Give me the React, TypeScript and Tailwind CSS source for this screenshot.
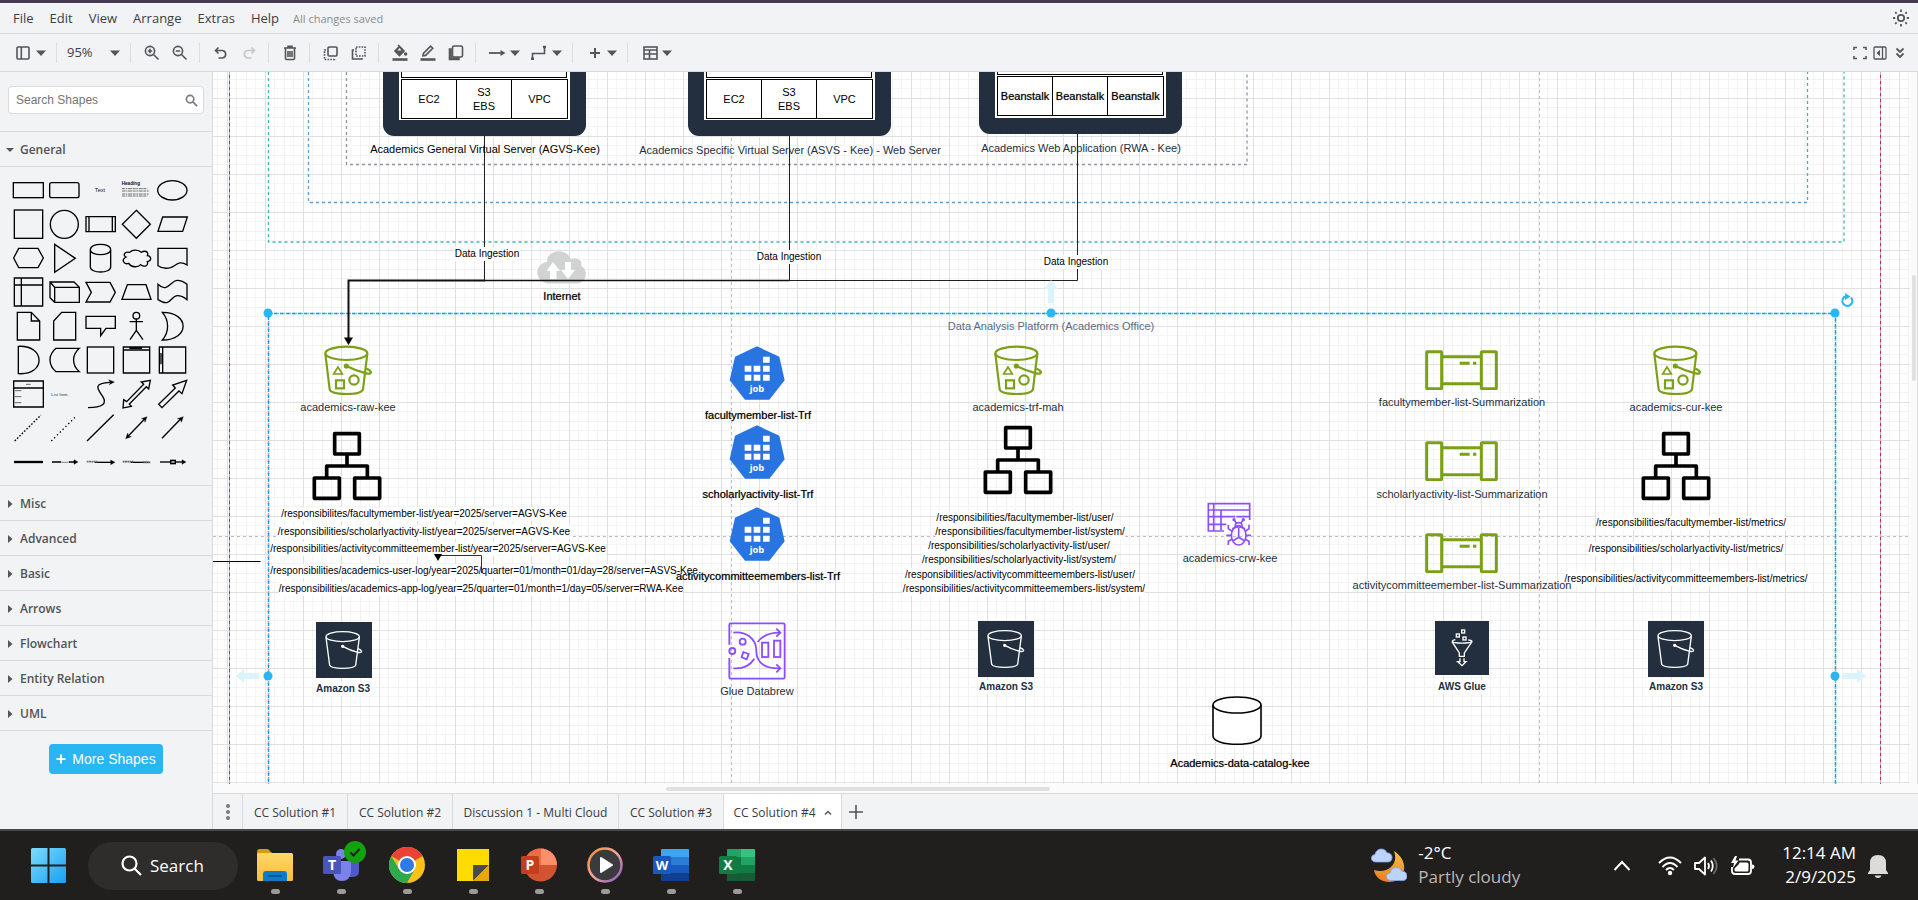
import React from "react";

/* ---------- shared helpers ---------- */

type P = { children?: React.ReactNode };

const Caret = () => (
  <svg width="10" height="6" viewBox="0 0 10 6" className="shrink-0">
    <path d="M0 0.5H10L5 6Z" fill="#555659" />
  </svg>
);

function ToolButton({ label, children, wide }: { label: string; children: React.ReactNode; wide?: boolean }) {
  return (
    <button
      aria-label={label}
      className={
        wide
          ? "flex h-7 w-[42px] shrink-0 items-center gap-[3px] pl-[5px] text-[#555659]"
          : "flex h-7 w-7 shrink-0 items-center justify-center text-[#555659]"
      }
    >
      {children}
    </button>
  );
}

const Group = ({ children }: P) => (
  <div className="flex h-5 shrink-0 items-center border-r border-[#dcdee0] px-1.5">{children}</div>
);

const I = ({ children }: P) => (
  <svg width="20" height="22" viewBox="-1 0 20 22" fill="none" stroke="currentColor" strokeWidth="1.6" className="shrink-0">
    {children}
  </svg>
);

/* ---------- menu and toolbar ---------- */

function MenuBar() {
  return (
    <header className="flex h-[34px] shrink-0 items-center border-b border-t-[3px] border-b-[#d8dadd] border-t-[#453a52] bg-[#f1f3f5] pl-[13px] pr-2">
      <nav className="flex items-center gap-4 pt-0.5 font-['Open_Sans',sans-serif] text-[13px] text-[#3f4042]">
        {["File", "Edit", "View", "Arrange", "Extras", "Help"].map((m) => (
          <button key={m}>{m}</button>
        ))}
      </nav>
      <span className="ml-3.5 pt-0.5 font-['Open_Sans',sans-serif] text-[11px] text-[#8a8c8f]">All changes saved</span>
      <button aria-label="Appearance" className="ml-auto text-[#555659]">
        <svg width="18" height="18" viewBox="0 0 18 18" fill="none" stroke="currentColor" strokeWidth="1.8">
          <circle cx="9" cy="9" r="3.2" />
          <path d="M9 0.5V3M9 15V17.5M1 9H3.2M14.8 9H17M3.2 3.2L4.6 4.6M13.4 13.4L14.8 14.8M14.8 3.2L13.4 4.6M4.6 13.4L3.2 14.8" />
        </svg>
      </button>
    </header>
  );
}

function Toolbar() {
  return (
    <div className="flex h-[38px] shrink-0 items-center border-b border-[#d8dadd] bg-[#f1f3f5] px-2">
      <div className="flex h-5 shrink-0 items-center border-r border-[#dcdee0] pr-1.5">
        <ToolButton label="View" wide>
          <I>
            <rect x="3" y="5" width="12" height="12" rx="1" />
            <path d="M7.3 5V17" />
          </I>
          <Caret />
        </ToolButton>
      </div>
      <div className="flex h-5 w-[74px] shrink-0 items-center border-r border-[#dcdee0] pl-[10px] pr-[10px]">
        <button className="flex flex-1 items-center justify-between font-['Open_Sans',sans-serif] text-[13px] text-[#3f4042]">
          95%
          <Caret />
        </button>
      </div>
      <Group>
        <ToolButton label="Zoom in">
          <I>
            <circle cx="8" cy="9" r="4.6" />
            <path d="M11.5 12.5L16.5 17.5M8 6.8V11.2M5.8 9H10.2" />
          </I>
        </ToolButton>
        <ToolButton label="Zoom out">
          <I>
            <circle cx="8" cy="9" r="4.6" />
            <path d="M11.5 12.5L16.5 17.5M5.8 9H10.2" />
          </I>
        </ToolButton>
      </Group>
      <Group>
        <ToolButton label="Undo">
          <I>
            <path d="M7.5 5.5L4.5 8.5L7.5 11.5M4.8 8.5H11.5A3.8 3.8 0 0 1 11.5 16H7.5" />
          </I>
        </ToolButton>
        <ToolButton label="Redo">
          <svg width="20" height="22" viewBox="-1 0 20 22" fill="none" stroke="#c4c6c8" strokeWidth="1.6">
            <path d="M12.5 5.5L15.5 8.5L12.5 11.5M15.2 8.5H8.5A3.8 3.8 0 0 0 8.5 16H12.5" />
          </svg>
        </ToolButton>
      </Group>
      <Group>
        <ToolButton label="Delete">
          <I>
            <path d="M4 6H16M8 5.6V4.4H12V5.6M5.5 6.5V16.5Q5.5 17.5 6.5 17.5H13.5Q14.5 17.5 14.5 16.5V6.5M8 9V15M10 9V15M12 9V15" />
          </I>
        </ToolButton>
      </Group>
      <Group>
        <ToolButton label="To front">
          <I>
            <rect x="7" y="5" width="9" height="9" rx="1" />
            <path d="M5 8H3.5V17.5H13.5V16" strokeDasharray="1.6 1.2" />
          </I>
        </ToolButton>
        <ToolButton label="To back">
          <I>
            <rect x="7" y="5" width="9" height="9" strokeDasharray="1.6 1.2" />
            <path d="M5 8H3.5V17H13V16" />
          </I>
        </ToolButton>
      </Group>
      <Group>
        <ToolButton label="Fill colour">
          <I>
            <path d="M5 9L9.5 4.5L14 9L9.5 13.5ZM8 3L9.5 4.5" fill="currentColor" />
            <path d="M7.5 8.5L9.5 6L11.5 8.5Z" fill="#f1f3f5" stroke="none" />
            <circle cx="15.6" cy="12" r="1" fill="currentColor" />
            <path d="M2.500 17.500H17.500" strokeWidth="2.6" />
          </I>
        </ToolButton>
        <ToolButton label="Line colour">
          <I>
            <path d="M5 13.8L5.4 11.4L12.6 4.2L14.8 6.2L7.6 13.4Z" />
            <path d="M2.500 17.500H17.500" strokeWidth="2.6" />
          </I>
        </ToolButton>
        <ToolButton label="Shadow">
          <I>
            <path d="M3.500 7V17.500H13V16H5V7Z" fill="currentColor" />
            <rect x="6.500" y="4" width="10" height="11" rx="1.5" />
          </I>
        </ToolButton>
      </Group>
      <Group>
        <ToolButton label="Connection" wide>
          <I>
            <path d="M1 11H14" strokeWidth="1.8" />
            <path d="M12.500 8L17.500 11L12.500 14Z" fill="currentColor" stroke="none" />
          </I>
          <Caret />
        </ToolButton>
        <ToolButton label="Waypoints" wide>
          <I>
            <path d="M2.500 17V11.500H14.500V5" />
            <path d="M2.500 15.500V18M14.500 3.800V6.200" strokeWidth="3" />
          </I>
          <Caret />
        </ToolButton>
      </Group>
      <Group>
        <ToolButton label="Insert" wide>
          <I>
            <path d="M10 6V16M5 11H15" strokeWidth="2" />
          </I>
          <Caret />
        </ToolButton>
      </Group>
      <div className="flex items-center pl-1.5">
        <ToolButton label="Table" wide>
          <I>
            <rect x="4" y="5" width="13" height="12" />
            <path d="M4 8H17M4 12H17M9.500 8V17" />
          </I>
          <Caret />
        </ToolButton>
      </div>
      <div className="ml-auto flex shrink-0 items-center text-[#555659]">
        <button aria-label="Fullscreen" className="flex w-5 justify-center">
          <svg width="14" height="14" viewBox="0 0 14 14" fill="none" stroke="currentColor" strokeWidth="1.6">
            <path d="M1 4V1.500H4M10 1.500H13V4M13 10V12.500H10M4 12.500H1V10" />
          </svg>
        </button>
        <button aria-label="Format panel" className="flex w-5 justify-center">
          <svg width="14" height="14" viewBox="0 0 14 14" fill="none" stroke="currentColor" strokeWidth="1.3">
            <rect x="1" y="1" width="12" height="12" rx="1" />
            <path d="M9.500 1V13" />
            <path d="M7 3.800V10.200L3.500 7Z" fill="currentColor" stroke="none" />
          </svg>
        </button>
        <button aria-label="Collapse" className="flex w-5 justify-center">
          <svg width="10" height="12" viewBox="0 0 10 12" fill="none" stroke="currentColor" strokeWidth="1.8">
            <path d="M1.500 1.500L5 5L8.500 1.500M1.500 6.500L5 10L8.500 6.500" />
          </svg>
        </button>
      </div>
    </div>
  );
}

/* ---------- shape library ---------- */

const shapes: [string, React.ReactNode][] = [
  ["Rectangle", <rect x="10" y="29" width="90" height="45" />],
  ["Rounded rectangle", <rect x="11" y="29" width="88" height="45" rx="6" />],
  ["Text", <text x="54" y="56" fontSize="17" textAnchor="middle" fill="#222" stroke="none">Text</text>],
  [
    "Heading",
    <g>
      <text x="11" y="36" fontSize="14" fontWeight="bold" fill="#111" stroke="none">Heading</text>
      <path d="M12 47H88M12 54H93M12 63H93M12 69H88" strokeWidth="2.5" strokeDasharray="9 2 5 2 12 2" stroke="#555" />
    </g>,
  ],
  ["Ellipse", <ellipse cx="55" cy="52" rx="44" ry="29" />],
  ["Square", <rect x="13" y="9" width="85" height="85" />],
  ["Circle", <circle cx="55" cy="52" r="42" />],
  ["Process", <path d="M12 29H100V74H12ZM21 29V74M91 29V74" />],
  ["Diamond", <path d="M55 10L97 52L55 94L13 52Z" />],
  ["Parallelogram", <path d="M26 30H100L86 73H12Z" />],
  ["Hexagon", <path d="M11 51L26 22H84L100 51L84 80H26Z" />],
  ["Triangle", <path d="M26 10L88 52L26 94Z" />],
  ["Cylinder", <path d="M25 26V78C25 98 86 98 86 78V26C86 5 25 5 25 26C25 46 86 46 86 26" />],
  [
    "Cloud",
    <path d="M35 34C19 30 14 44 24 48C8 56 18 72 32 67C40 80 60 80 68 71C80 80 92 74 88 62C104 58 98 44 88 44C94 30 78 28 70 34C62 26 44 24 35 34Z" />,
  ],
  ["Document", <path d="M12 22H99V72C76 56 66 74 50 80C34 84 20 80 12 74Z" />],
  ["Internal storage", <path d="M13 9H98V93H13ZM13 30H98M34 9V93" />],
  ["Cube", <path d="M12 21H84L100 37V82H26L12 68ZM12 21L26 37V82M26 37H100" />],
  ["Step", <path d="M12 22H84L100 52L84 81H12L28 52Z" />],
  ["Trapezoid", <path d="M28 29H84L99 73H12Z" />],
  ["Tape", <path d="M12 28C40 56 50 16 70 16C84 16 92 22 99 28V74C92 68 84 62 70 62C50 62 50 100 12 74Z" />],
  ["Note", <path d="M22 10H64L89 36V93H22ZM64 10V36H89" />],
  ["Card", <path d="M47 10H89V93H23V36Z" />],
  ["Callout", <path d="M12 22H100V58H72L56 80V58H12Z" />],
  [
    "Actor",
    <g>
      <circle cx="55" cy="20" r="10" />
      <path d="M55 30V64M35 38H75M55 64L36 92M55 64L75 92" />
    </g>,
  ],
  ["Or", <path d="M25 10C108 10 108 93 25 93C46 70 46 34 25 10Z" />],
  ["And", <path d="M25 10C108 6 108 98 25 92Z" />],
  ["Data storage", <path d="M30 16H100C77 36 77 66 100 86H30C6 66 6 36 30 16Z" />],
  ["Container", <rect x="16" y="12" width="79" height="78" />],
  ["Vertical container", <path d="M16 12H95V90H16ZM16 21H95M34 16H72" />],
  ["Horizontal container", <path d="M16 12H95V90H16ZM26 12V90M21 30V64" />],
  [
    "List",
    <g>
      <path d="M11 12H100V90H11ZM11 33H100" />
      <path d="M48 22H62M14 41H34M14 59H34M14 77H34" strokeWidth="3" stroke="#666" />
    </g>,
  ],
  ["List item", <text x="16" y="56" fontSize="13" fill="#333" stroke="none">List Item</text>],
  [
    "Curve",
    <g>
      <path d="M18 92C62 92 76 80 62 58C48 38 30 18 84 16" />
      <path d="M80 8L97 15L82 23L85 16Z" fill="#000" strokeWidth="1" />
    </g>,
  ],
  ["Bidirectional arrow", <path d="M15 93L17 68L26 74L77 22L70 15L97 10L92 36L85 29L34 81L40 88Z" />],
  ["Arrow", <path d="M14 82L64 33L56 24L98 10L84 50L75 42L24 92Z" />],
  ["Dashed line", <path d="M14 90L93 12" strokeDasharray="5 5" />],
  ["Dotted line", <path d="M16 90L90 16" strokeDasharray="4 8" />],
  ["Line", <path d="M15 90L95 11" />],
  [
    "Bidirectional connector",
    <g>
      <path d="M28 78L82 22" />
      <path d="M23 83L29 66L31 75L40 77ZM87 17L81 34L79 25L70 23Z" fill="#000" strokeWidth="1" />
    </g>,
  ],
  [
    "Directional connector",
    <g>
      <path d="M24 82L82 22" />
      <path d="M88 17L82 34L79 25L70 23Z" fill="#000" strokeWidth="1" />
    </g>,
  ],
  ["Link", <path d="M12 51H99" strokeWidth="7" />],
  [
    "Connector with label",
    <g>
      <path d="M18 51H46M68 51H88" />
      <path d="M48 52H66" strokeWidth="3" stroke="#888" />
      <path d="M84 44L96 51L84 58Z" fill="#000" strokeWidth="1" />
    </g>,
  ],
  [
    "Connector with two labels",
    <g>
      <path d="M38 52H92" />
      <path d="M14 50H46" strokeWidth="5" stroke="#777" strokeDasharray="6 1" />
      <path d="M86 45L99 52L86 59Z" fill="#000" strokeWidth="1" />
    </g>,
  ],
  [
    "Connector with three labels",
    <g>
      <path d="M38 52H92" />
      <path d="M14 50H46M76 52H98" strokeWidth="5" stroke="#666" strokeDasharray="6 1" />
    </g>,
  ],
  [
    "Connector with symbol",
    <g>
      <path d="M18 51H88" />
      <rect x="50" y="46" width="14" height="10" fill="#999" />
      <path d="M84 44L96 51L84 58Z" fill="#000" strokeWidth="1" />
    </g>,
  ],
];

function Sidebar() {
  return (
    <aside className="flex w-[213px] shrink-0 flex-col border-r border-[#d8dadd] bg-[#f1f3f5]">
      <div className="border-b border-[#d8dadd] pt-[14px] pr-2 pb-[17px] pl-2">
        <label className="flex h-7 items-center rounded border border-[#d9dbdd] bg-white pr-[5px] pl-[7px]">
          <input
            aria-label="Search Shapes"
            placeholder="Search Shapes"
            className="min-w-0 flex-1 bg-transparent font-['Liberation_Sans',sans-serif] text-[12px] text-[#333] outline-none placeholder:text-[#757575]"
          />
          <svg width="13" height="13" viewBox="0 0 14 14" fill="none" stroke="#77797c" strokeWidth="1.800">
            <circle cx="5.500" cy="5.500" r="4" />
            <path d="M8.500 8.500L13 13" />
          </svg>
        </label>
      </div>
      <button className="flex h-[35px] shrink-0 items-center border-b border-[#d8dadd] pt-0.5 pl-[5px] font-['Open_Sans',sans-serif] text-[12px] font-semibold text-[#515356]">
        <svg width="10" height="6" viewBox="0 0 10 6" className="mr-[5px]">
          <path d="M1 1H9L5 5Z" fill="#555659" />
        </svg>
        General
      </button>
      <div className="grid grid-cols-[repeat(5,36px)] border-b border-[#d8dadd] pt-[6px] pb-[6px] pl-[10px]">
        {shapes.map(([name, art]) => (
          <button key={name} aria-label={name} className="h-[34px] w-9">
            <svg
              width="36"
              height="34"
              viewBox="0 0 108 102"
              fill="none"
              stroke="#000"
              strokeWidth="4"
              fontFamily="Liberation Sans, sans-serif"
            >
              {art}
            </svg>
          </button>
        ))}
      </div>
      {["Misc", "Advanced", "Basic", "Arrows", "Flowchart", "Entity Relation", "UML"].map((s) => (
        <button
          key={s}
          className="flex h-[35px] shrink-0 items-center border-b border-[#d8dadd] pt-0.5 pl-2 font-['Open_Sans',sans-serif] text-[12px] font-semibold text-[#515356]"
        >
          <svg width="5" height="8" viewBox="0 0 5 8" className="mr-[7px]">
            <path d="M0 0L4.500 4L0 8Z" fill="#555659" />
          </svg>
          {s}
        </button>
      ))}
      <button className="mt-[13px] mb-4 flex h-[30px] w-[114px] shrink-0 items-center justify-center gap-1.5 self-center rounded bg-[#29b6f2] font-['Liberation_Sans',sans-serif] text-[14px] text-white">
        <svg width="10" height="10" viewBox="0 0 10 10" stroke="#fff" strokeWidth="2">
          <path d="M5 0.500V9.500M0.500 5H9.500" />
        </svg>
        More Shapes
      </button>
    </aside>
  );
}

/* ---------- canvas ---------- */

/* Diagram coordinates are window based; the view origin is the canvas corner. */
const OX = 213;
const OY = 72;

function Node({ x, y, children }: { x: number; y: number; children: React.ReactNode }) {
  return (
    <div className="absolute" style={{ left: x - OX, top: y - OY }}>
      {children}
    </div>
  );
}

const tones = {
  black: "text-[11px] text-black",
  navy: "text-[11px] text-[#232f3e]",
  slate: "text-[11px] text-[#5a6c86]",
  edge: "bg-white text-[10px] text-black",
  solid: "text-[11px] text-black [text-shadow:0_0_1px_#0008]",
  bold: "bg-white text-[10px] font-bold text-[#232f3e]",
};

function Label({ x, y, tone, children }: { x: number; y: number; tone: keyof typeof tones; children: string }) {
  return (
    <div
      className={
        "absolute -translate-x-1/2 -translate-y-1/2 font-['Liberation_Sans',Arial,sans-serif] leading-[14px] whitespace-nowrap " +
        tones[tone]
      }
      style={{ left: x - OX, top: y - OY }}
    >
      {children}
    </div>
  );
}

function Server({ x, bottom, pad, cells, strong }: { x: number; bottom: number; pad: string; cells: string[]; strong?: boolean }) {
  return (
    <div
      className="absolute flex w-[203px] flex-col rounded-b-[11px] bg-[#232f3e] px-4 pb-4"
      style={{ left: x - OX, top: 0, height: bottom - OY }}
    >
      <div className={"flex flex-1 flex-col justify-end bg-white px-0.5 " + pad}>
        <div className="mr-px flex-1 border-x border-b border-black" />
        <div className="mt-px grid h-10 grid-cols-3 divide-x divide-black border border-black bg-white text-center font-['Liberation_Sans',Arial,sans-serif] text-[11px] leading-[14px] text-black">
          {cells.map((c, i) => (
            <div key={i} className="flex items-center justify-center whitespace-pre-line">
              {strong ? <span className="[text-shadow:0_0_1px_#0008]">{c}</span> : c}
            </div>
          ))}
        </div>
      </div>
    </div>
  );
}

const Bucket = () => (
  <svg width="50" height="51" viewBox="340 134 150 153" fill="none" stroke="#7aa116" strokeWidth="6.500">
    <ellipse cx="410" cy="159" rx="63" ry="20" />
    <path d="M347 160L360 267Q363 281 410 281Q455 281 460 267L473 160" />
    <circle cx="410" cy="197" r="4.500" fill="#7aa116" />
    <path d="M410 197Q440 212 470 219Q484 222 484 216Q482 209 470 205" />
    <path d="M385 200L372 221H398Z" strokeWidth="5" />
    <rect x="379" y="240" width="24" height="24" />
    <circle cx="433" cy="239" r="14" />
  </svg>
);

const Hierarchy = () => (
  <svg width="70" height="70" viewBox="305 393 210 210" fill="none" stroke="#000" strokeWidth="11" strokeLinejoin="round">
    <rect x="373" y="401" width="74" height="61" />
    <rect x="312" y="534" width="75" height="61" />
    <rect x="433" y="534" width="75" height="61" />
    <path d="M410 462V497M349 534V498H471V534" />
  </svg>
);

const Job = () => (
  <svg width="56" height="54" viewBox="208 139 168 162">
    <path d="M292 140L359 171L375 242L329 300H256L210 242L226 171Z" fill="#2875e2" />
    <path
      d="M310 171h20v18h-20zM255 198h20v18h-20zM282 198h20v18h-20zM310 198h20v18h-20zM255 225h20v18h-20zM282 225h20v18h-20zM310 225h20v18h-20z"
      fill="#fff"
    />
    <text x="292" y="276" textAnchor="middle" fill="#fff" fontSize="28" fontWeight="700" fontFamily="Open Sans, sans-serif">
      job
    </text>
  </svg>
);

const S3Tile = () => (
  <svg width="56" height="56" viewBox="0 0 168 168" fill="none" stroke="#fff" strokeWidth="4">
    <rect width="168" height="168" fill="#232f3e" stroke="none" />
    <ellipse cx="80" cy="44" rx="50" ry="15" />
    <path d="M30 46L41 130Q45 139 80 139Q115 139 119 130L130 46" />
    <circle cx="80" cy="73" r="3" fill="#fff" />
    <path d="M80 73Q104 86 126 91Q137 93 137 88Q136 84 126 80" />
  </svg>
);

const GlueTile = () => (
  <svg width="54" height="54" viewBox="944 962 162 162" fill="none" stroke="#fff" strokeWidth="4">
    <rect x="944" y="962" width="162" height="162" fill="#232f3e" stroke="none" />
    <rect x="1024" y="989" width="9" height="9" />
    <rect x="1008" y="1001" width="9" height="9" />
    <rect x="1028" y="1010" width="9" height="9" />
    <path d="M1005 1018Q990 1022 1000 1026Q1024 1031 1050 1026Q1062 1021 1044 1019" />
    <path d="M995 1024L1017 1058V1068H1032V1058L1055 1024" />
    <path d="M1019 1074V1084H1012L1025 1096L1037 1084H1031V1074" />
  </svg>
);

const Databrew = () => (
  <svg width="58" height="58" viewBox="203 964 174 174" fill="none" stroke="#8c4fff" strokeWidth="5.500">
    <path d="M207 1032V972Q207 968 211 968H369Q373 968 373 972V1130Q373 1134 369 1134H211Q207 1134 207 1130V1072" />
    <path d="M219 996C252 991 288 1010 288 1051C288 1090 320 1104 358 1103" />
    <path d="M219 1103Q262 1106 282 1074M292 1024Q312 996 358 996" />
    <path d="M348 984L360 996L348 1008M348 1091L360 1103L348 1115" />
    <circle cx="247" cy="1023" r="9" />
    <circle cx="216" cy="1051" r="9" />
    <path d="M249 1054L265 1060L259 1076L244 1070Z" />
    <rect x="305" y="1026" width="19" height="43" />
    <rect x="341" y="1020" width="19" height="49" />
  </svg>
);

const Crawler = () => (
  <svg width="45" height="46" viewBox="262 606 135 138" fill="none" stroke="#8c4fff" strokeWidth="5">
    <path d="M313 693H266V611H390V660M266 630H390M266 650H347M266 673H320M282 611V693M304 630V690M350 650H390" />
    <ellipse cx="357" cy="706" rx="22" ry="29" />
    <path d="M338 686Q357 676 376 686M357 684V714M340 722L357 712L374 722" />
    <path d="M347 680Q345 668 357 668Q369 668 367 680M349 668L344 660M365 668L370 660" />
    <circle cx="343" cy="659" r="2.500" fill="#8c4fff" />
    <circle cx="371" cy="659" r="2.500" fill="#8c4fff" />
    <path d="M336 693L326 686V674M378 693L388 686V674M334 706H320M380 706H394M337 718L326 724V735M377 718L388 724V735" />
  </svg>
);

const Pipe = () => (
  <svg width="73" height="40" viewBox="915 422 219 120" fill="none" stroke="#7aa116" strokeWidth="9">
    <rect x="920" y="427" width="45" height="111" rx="2" />
    <rect x="1084" y="427" width="45" height="111" rx="2" />
    <path d="M965 442H1084M965 523H1084M1019 462H1049M1059 462H1069" />
  </svg>
);

const labels: [number, number, keyof typeof tones, string][] = [
  [485, 149, "black", "Academics General Virtual Server (AGVS-Kee)"],
  [790, 150, "navy", "Academics Specific Virtual Server (ASVS - Kee) - Web Server"],
  [1081, 148, "navy", "Academics Web Application (RWA - Kee)"],
  [487, 254, "edge", "Data Ingestion"],
  [789, 257, "edge", "Data Ingestion"],
  [1076, 262, "edge", "Data Ingestion"],
  [562, 296, "solid", "Internet"],
  [1051, 326, "slate", "Data Analysis Platform (Academics Office)"],
  [348, 407, "navy", "academics-raw-kee"],
  [1018, 407, "navy", "academics-trf-mah"],
  [1676, 407, "navy", "academics-cur-kee"],
  [424, 514, "edge", "/responsibilites/facultymember-list/year=2025/server=AGVS-Kee"],
  [424, 532, "edge", "/responsibilities/scholarlyactivity-list/year=2025/server=AGVS-Kee"],
  [438, 549, "edge", "/responsibilities/activitycommitteemember-list/year=2025/server=AGVS-Kee"],
  [484, 571, "edge", "/responsibilities/academics-user-log/year=2025/quarter=01/month=01/day=28/server=ASVS-Kee"],
  [481, 589, "edge", "/responsibilities/academics-app-log/year=25/quarter=01/month=1/day=05/server=RWA-Kee"],
  [758, 415, "solid", "facultymember-list-Trf"],
  [758, 494, "solid", "scholarlyactivity-list-Trf"],
  [758, 576, "solid", "activitycommitteemembers-list-Trf"],
  [1025, 518, "edge", "/responsibilities/facultymember-list/user/"],
  [1030, 532, "edge", "/responsibilities/facultymember-list/system/"],
  [1019, 546, "edge", "/responsibilities/scholarlyactivity-list/user/"],
  [1019, 560, "edge", "/responsibilities/scholarlyactivity-list/system/"],
  [1020, 575, "edge", "/responsibilities/activitycommitteemembers-list/user/"],
  [1024, 589, "edge", "/responsibilities/activitycommitteemembers-list/system/"],
  [1691, 523, "edge", "/responsibilities/facultymember-list/metrics/"],
  [1686, 549, "edge", "/responsibilities/scholarlyactivity-list/metrics/"],
  [1686, 579, "edge", "/responsibilities/activitycommitteemembers-list/metrics/"],
  [1462, 402, "navy", "facultymember-list-Summarization"],
  [1462, 494, "navy", "scholarlyactivity-list-Summarization"],
  [1462, 585, "navy", "activitycommitteemember-list-Summarization"],
  [1230, 558, "navy", "academics-crw-kee"],
  [343, 689, "bold", "Amazon S3"],
  [1006, 687, "bold", "Amazon S3"],
  [1676, 687, "bold", "Amazon S3"],
  [1462, 687, "bold", "AWS Glue"],
  [757, 691, "navy", "Glue Databrew"],
  [1240, 763, "solid", "Academics-data-catalog-kee"],
];

function Canvas() {
  return (
    <div className="relative min-h-0 flex-1 overflow-hidden bg-white">
      <svg className="absolute inset-0 h-full w-full">
        <defs>
          <pattern id="grid" width="38" height="38" x="14" y="26" patternUnits="userSpaceOnUse">
            <path d="M9.500 0V38M28.500 0V38M0 9.500H38M0 28.500H38" stroke="#f5f5f5" fill="none" />
            <path d="M19.500 0V38M0 19.500H38" stroke="#f2f2f2" fill="none" />
            <path d="M0.500 0V38M0 0.500H38" stroke="#e0e0e0" fill="none" />
          </pattern>
        </defs>
        <rect width="100%" height="100%" fill="url(#grid)" />
        <g transform="translate(-213 -72)" fill="none">
          <path d="M731.500 72V1200M1539.500 72V1200M213 536.500H2400" stroke="#bdbdbd" strokeDasharray="3 3" />
          <path d="M229.500 72V1200M1880.500 72V1200" stroke="#cd2264" />
          <path d="M229.500 72V1200M1880.500 72V1200" stroke="#b4b4b4" strokeDasharray="3 3" />
          <path d="M268.500 72V242H1844V72" stroke="#3fb8b0" strokeDasharray="3 3" strokeWidth="1.3" />
          <path d="M308.500 72V202.500H1807.500V72" stroke="#5a9fd0" strokeDasharray="3 3" strokeWidth="1.3" />
          <path d="M346.500 72V164.500H1247V72" stroke="#8a94ae" strokeDasharray="3 3" strokeWidth="1.3" />
          <path d="M268.500 1200V313.500H1835.500V1200" stroke="#a2a9b2" strokeWidth="1.600" strokeDasharray="3 3" />
          <path d="M268.500 1200V313.500H1835.500V1200" stroke="#00a0f4" strokeDasharray="3 3" strokeDashoffset="2" strokeWidth="1.400" />
          <path
            d="M548 283.500C533 281 535 263 547 262C546 251 565 246 571 259C580 256 583 264 581 266C588 269 588 282 577 283.500Z"
            fill="#d1d3d3"
          />
          <path d="M553 262L560 271H556.500V279H550V271H546.500ZM568 279L561 270H565V262H571V270H575Z" fill="#fff" />
          <path d="M213 561.500H260.500" stroke="#000" />
        </g>
      </svg>

      <Server x={383} bottom={136} pad="pb-px" cells={["EC2", "S3\nEBS", "VPC"]} />
      <Server x={688} bottom={136} pad="pb-px" cells={["EC2", "S3\nEBS", "VPC"]} />
      <Server x={979} bottom={134} pad="pb-0.5" cells={["Beanstalk", "Beanstalk", "Beanstalk"]} strong />

      <svg className="absolute inset-0 h-full w-full">
        <g transform="translate(-213 -72)" fill="none" stroke="#222">
          <path d="M1077.500 134V280.500H789" />
          <path d="M789.500 136V280.500" />
          <path d="M789.500 280.500H484" strokeWidth="1.500" stroke="#111" />
          <path d="M484.500 136V280" />
          <path d="M485 280.500H348.500V338" strokeWidth="2" stroke="#111" />
          <path d="M344 337.500H353L348.500 345Z" fill="#000" stroke="none" />
        </g>
      </svg>

      {[
        [323, 345],
        [993, 345],
        [1652, 345],
      ].map(([x, y]) => (
        <Node key={x} x={x} y={y}>
          <Bucket />
        </Node>
      ))}
      {[
        [312, 431],
        [983, 425],
        [1641, 431],
      ].map(([x, y]) => (
        <Node key={x} x={x} y={y}>
          <Hierarchy />
        </Node>
      ))}
      {[346, 425, 507].map((y) => (
        <Node key={y} x={729} y={y}>
          <Job />
        </Node>
      ))}
      {[
        [316, 622],
        [978, 621],
        [1648, 621],
      ].map(([x, y]) => (
        <Node key={x} x={x} y={y}>
          <S3Tile />
        </Node>
      ))}
      {[350, 441, 533].map((y) => (
        <Node key={y} x={1425} y={y}>
          <Pipe />
        </Node>
      ))}
      <Node x={1435} y={621}>
        <GlueTile />
      </Node>
      <Node x={728} y={622}>
        <Databrew />
      </Node>
      <Node x={1207} y={502}>
        <Crawler />
      </Node>
      <Node x={1211} y={695}>
        <svg width="52" height="51" viewBox="0 0 52 51" fill="#fff" stroke="#000" strokeWidth="1.600">
          <path d="M2 10V41C2 52 50 52 50 41V10" />
          <ellipse cx="26" cy="10" rx="24" ry="8" />
        </svg>
      </Node>

      {labels.map(([x, y, tone, text], i) => (
        <Label key={i} x={x} y={y} tone={tone}>
          {text}
        </Label>
      ))}

      <svg className="pointer-events-none absolute inset-0 h-full w-full">
        <g transform="translate(-213 -72)">
          <path d="M481.500 573V555.500H438" stroke="#333" fill="none" />
          <path d="M434 554H442L438 561Z" fill="#000" />
          <path d="M1051 280L1058 289H1054V303H1048V289H1044Z" fill="#dcf3fd" />
          <path d="M236 676L244 669V673H259V679H244V683Z" fill="#dcf3fd" />
          <path d="M1866 676L1857 669V673H1842V679H1857V683Z" fill="#dcf3fd" />
          <g fill="#29b6f2">
            <circle cx="268" cy="313" r="4.500" />
            <circle cx="1051" cy="313" r="4.500" />
            <circle cx="1835" cy="313" r="4.500" />
            <circle cx="268" cy="676" r="4.500" />
            <circle cx="1835" cy="676" r="4.500" />
          </g>
          <path d="M1851 297.500A5 5 0 1 1 1845 296.500" fill="none" stroke="#29b6f2" strokeWidth="2" />
          <path d="M1845 293L1850.500 296.500L1845 300Z" fill="#29b6f2" />
        </g>
      </svg>
    </div>
  );
}

function PageTabs() {
  const tabs = ["CC Solution #1", "CC Solution #2", "Discussion 1 - Multi Cloud", "CC Solution #3"];
  return (
    <div className="flex h-9 shrink-0 items-stretch border-t border-[#d8dadd] bg-[#f1f3f5] font-['Open_Sans',sans-serif] text-[12px] text-[#3a3b3d]">
      <button aria-label="Pages" className="flex w-[30px] items-center justify-center border-r border-[#d8dadd]">
        <svg width="4" height="16" viewBox="0 0 4 16" fill="#77797c">
          <circle cx="2" cy="2" r="2" />
          <circle cx="2" cy="8" r="2" />
          <circle cx="2" cy="14" r="2" />
        </svg>
      </button>
      {tabs.map((t, i) => (
        <button
          key={t}
          className={
            i === 2
              ? "w-[166px] border-r border-[#d8dadd] pt-0.5 whitespace-nowrap"
              : "w-[105px] border-r border-[#d8dadd] pt-0.5 whitespace-nowrap"
          }
        >
          {t}
        </button>
      ))}
      <button className="flex w-[118px] items-center justify-center gap-2 border-r border-[#d8dadd] bg-white pt-0.5 whitespace-nowrap">
        CC Solution #4
        <svg width="8" height="6" viewBox="0 0 8 6" fill="none" stroke="#555659" strokeWidth="1.500">
          <path d="M1 4.500L4 1.500L7 4.500" />
        </svg>
      </button>
      <button aria-label="Insert page" className="flex w-[28px] items-center justify-center">
        <svg width="14" height="14" viewBox="0 0 14 14" stroke="#555659" strokeWidth="1.600">
          <path d="M7 0V14M0 7H14" />
        </svg>
      </button>
    </div>
  );
}

/* ---------- taskbar ---------- */

const appIcons: [string, React.ReactNode][] = [
  [
    "File Explorer",
    <g>
      <path d="M0 5Q0 2 3 2H11L15 6V12H0Z" fill="#d99a12" />
      <rect y="6" width="36" height="28" rx="1.500" fill="url(#fold)" />
      <path d="M6 34V27Q6 24 9 24H27Q30 24 30 27V34Z" fill="#0f7ac8" />
      <path d="M11 29H25" stroke="#0a4f8a" strokeWidth="1.500" />
    </g>,
  ],
  [
    "Teams",
    <g>
      <circle cx="18" cy="7" r="5" fill="#7b83eb" />
      <path d="M24 14H36V24Q36 30 29 30H24Z" fill="#5059c9" />
      <path d="M10 14H28V25Q27 34 19 34T10 25Z" fill="#7b83eb" />
      <rect y="9" width="18" height="18" rx="1.500" fill="#4b53bc" />
      <text x="9" y="23" textAnchor="middle" fontSize="14" fontWeight="700" fill="#fff">T</text>
    </g>,
  ],
  [
    "Chrome",
    <g>
      <circle cx="18" cy="18" r="18" fill="#fbc116" />
      <path d="M18 18L2.400 9A18 18 0 0 1 33.600 9Z" fill="#ea4335" />
      <path d="M18 0A18 18 0 0 1 33.600 9H18Z" fill="#ea4335" />
      <path d="M2.400 9A18 18 0 0 0 18 36L25.800 22.500L18 26Q12 25 10.200 22.500Z" fill="#2da94f" />
      <circle cx="18" cy="18" r="9" fill="#fff" />
      <circle cx="18" cy="18" r="7" fill="#2f7ae5" />
    </g>,
  ],
  [
    "Sticky Notes",
    <g>
      <path d="M2 2H34V34H2Z" fill="#ffdc00" />
      <path d="M18 18H34L18 34Z" fill="#4a4a4a" />
      <path d="M34 18V34H18Z" fill="#e8a80c" />
    </g>,
  ],
  [
    "PowerPoint",
    <g>
      <circle cx="19.500" cy="18" r="16.500" fill="#d35230" />
      <path d="M19.500 1.500A16.500 16.500 0 0 1 36 18H19.500Z" fill="#ff8f6b" />
      <path d="M19.500 1.500A16.500 16.500 0 0 0 3 18H19.500Z" fill="#ed6c47" />
      <rect y="9" width="18" height="18" rx="1.500" fill="#c43e1c" />
      <text x="9" y="23" textAnchor="middle" fontSize="14" fontWeight="700" fill="#fff">P</text>
    </g>,
  ],
  [
    "Media Player",
    <g>
      <circle cx="18" cy="18" r="16.500" fill="#3b3b3d" stroke="url(#ring)" strokeWidth="2.500" />
      <path d="M14 11V25L25 18Z" fill="#fff" stroke="#fff" strokeWidth="2" strokeLinejoin="round" />
    </g>,
  ],
  [
    "Word",
    <g>
      <path d="M8 10V3Q8 2 9 2H35Q36 2 36 3V10Z" fill="#41a5ee" />
      <path d="M8 10H36V18H8Z" fill="#2b7cd3" />
      <path d="M8 18H36V26H8Z" fill="#185abd" />
      <path d="M8 26H36V33Q36 34 35 34H9Q8 34 8 33Z" fill="#103f91" />
      <rect y="9" width="18" height="18" rx="1.500" fill="#185abd" />
      <text x="9" y="23" textAnchor="middle" fontSize="13" fontWeight="700" fill="#fff">W</text>
    </g>,
  ],
  [
    "Excel",
    <g>
      <path d="M8 10V3Q8 2 9 2H22V10Z" fill="#21a366" />
      <path d="M22 2H35Q36 2 36 3V10H22Z" fill="#33c481" />
      <path d="M8 10H22V18H8Z" fill="#107c41" />
      <path d="M22 10H36V18H22Z" fill="#21a366" />
      <path d="M8 18H36V26H8Z" fill="#107c41" />
      <path d="M8 26H36V33Q36 34 35 34H9Q8 34 8 33Z" fill="#185c37" />
      <rect y="9" width="18" height="18" rx="1.500" fill="#107c41" />
      <text x="9" y="23" textAnchor="middle" fontSize="14" fontWeight="700" fill="#fff">X</text>
    </g>,
  ],
];

const CloudShape = ({ t }: { t: string }) => (
  <path
    transform={t}
    d="M5 14C-1 14 -1 7 4 6.500C5 0 14 -1 16 5C22 4 23 14 17 14Z"
    fill="#bcd4fb"
    stroke="#7fa3e6"
    strokeWidth="0.800"
  />
);

function Taskbar() {
  return (
    <footer className="flex h-[71px] shrink-0 items-center border-t-2 border-[#47474a] bg-[#201f1e] pl-[31px] pr-[30px] font-['Open_Sans',sans-serif] text-white">
      <button aria-label="Start" className="shrink-0">
        <svg width="35" height="35" viewBox="0 0 35 35">
          <defs>
            <linearGradient id="win" x1="0" y1="0" x2="1" y2="1" gradientUnits="objectBoundingBox">
              <stop offset="0" stopColor="#7fdcfb" />
              <stop offset="1" stopColor="#14a0f5" />
            </linearGradient>
          </defs>
          <path d="M0 1.500Q0 0 1.500 0H16.500V16.500H0ZM18.500 0H33.500Q35 0 35 1.500V16.500H18.500ZM0 18.500H16.500V35H1.500Q0 35 0 33.500ZM18.500 18.500H35V33.500Q35 35 33.500 35H18.500Z" fill="url(#win)" />
        </svg>
      </button>
      <button className="ml-[22px] flex h-12 w-[150px] shrink-0 items-center gap-2 rounded-full bg-[#2e2d2c] pl-[33px] text-[17px]">
        <svg width="21" height="21" viewBox="0 0 21 21" fill="none" stroke="#fff" strokeWidth="2.200">
          <circle cx="8.500" cy="8.500" r="7" />
          <path d="M13.500 13.500L20 20" />
        </svg>
        Search
      </button>
      <div className="ml-1 flex shrink-0">
        {appIcons.map(([name, art]) => (
          <button key={name} aria-label={name} className="relative flex h-[69px] w-[66px] flex-col items-center pt-4">
            <svg width="36" height="36" viewBox="0 0 36 36" fontFamily="Open Sans, sans-serif">
              <defs>
                <linearGradient id="fold" x1="0" y1="0" x2="0" y2="1">
                  <stop offset="0" stopColor="#ffd869" />
                  <stop offset="1" stopColor="#f8bd35" />
                </linearGradient>
                <linearGradient id="ring" x1="0" y1="0" x2="1" y2="1">
                  <stop offset="0" stopColor="#f7902f" />
                  <stop offset="0.500" stopColor="#f3a69b" />
                  <stop offset="1" stopColor="#8257c9" />
                </linearGradient>
              </defs>
              {art}
            </svg>
            <span className="mt-[6px] h-[5px] w-[9px] rounded-full bg-[#9b9b9b]" />
            {name === "Teams" && (
              <svg className="absolute top-2.5 left-9" width="22" height="22" viewBox="0 0 22 22">
                <circle cx="11" cy="11" r="11" fill="#13a10e" />
                <path d="M6.500 11.500L9.500 14.500L15.500 8" stroke="#201f1e" strokeWidth="2" fill="none" />
              </svg>
            )}
          </button>
        ))}
      </div>
      <button className="ml-auto flex shrink-0 items-center gap-[11px] pb-0.5 text-left text-[17px] leading-6">
        <svg width="36" height="34" viewBox="0 0 36 34">
          <defs>
            <linearGradient id="moon" x1="0" y1="0" x2="0" y2="1">
              <stop offset="0" stopColor="#f2c544" />
              <stop offset="1" stopColor="#ee7a1c" />
            </linearGradient>
          </defs>
          <path d="M23 3C40 14 34 34 18 34C10 34 4 29 3 22C17 26 28 16 23 3Z" fill="url(#moon)" />
          <CloudShape t="translate(0 0)" />
          <CloudShape t="translate(15 18.500)" />
        </svg>
        <span>
          <span className="block">-2°C</span>
          <span className="block text-[#b9b8b7]">Partly cloudy</span>
        </span>
      </button>
      <button aria-label="Hidden icons" className="ml-[93px] shrink-0">
        <svg width="18" height="12" viewBox="0 0 18 12" fill="none" stroke="#fff" strokeWidth="2">
          <path d="M1.500 10L9 2L16.500 10" />
        </svg>
      </button>
      <button aria-label="Network, sound and battery" className="ml-[27px] flex shrink-0 items-center gap-3">
        <svg width="24" height="20" viewBox="0 0 24 20" fill="none" stroke="#fff" strokeWidth="2">
          <path d="M1 7Q12 -4 23 7M4.500 11Q12 3 19.500 11M8 14Q12 10 16 14" />
          <circle cx="12" cy="17" r="2.200" fill="#fff" stroke="none" />
        </svg>
        <svg width="24" height="20" viewBox="0 0 24 20" fill="none" stroke="#fff" strokeWidth="1.800">
          <path d="M1 7H5L11 1.500V18.500L5 13H1Z" strokeLinejoin="round" />
          <path d="M14 7Q16 10 14 13M17 4.500Q20.500 10 17 15.500" />
          <path d="M19.500 2Q26 10 19.500 18" stroke="#6b6a69" />
        </svg>
        <svg width="25" height="20" viewBox="0 0 25 20">
          <path d="M9 3.500H18Q21 3.500 21 6.500V15Q21 18 18 18H5Q2 18 2 15V11" fill="none" stroke="#fff" strokeWidth="1.800" />
          <path d="M9.500 6.500H17Q18.500 6.500 18.500 8V14Q18.500 15.500 17 15.500H6Q4.500 15.500 4.500 14V12.500L9 8Z" fill="#fff" />
          <path d="M22 8.500Q24.500 8.500 24.500 10.700T22 13Z" fill="#fff" />
          <path d="M5 0L1 7H4L3 12L8.500 4.500H5.500L7 0Z" fill="#fff" />
        </svg>
      </button>
      <button className="ml-[27px] shrink-0 pb-0.5 text-right text-[17px] leading-6">
        <span className="block">12:14 AM</span>
        <span className="block">2/9/2025</span>
      </button>
      <button aria-label="Notifications" className="ml-3 shrink-0">
        <svg width="20" height="24" viewBox="0 0 20 24" fill="#dcdbda">
          <path d="M2 16V9Q2 1 10 1T18 9V16L20 19V20H0V19ZM6.500 21.500H13.500Q12.500 24 10 24T6.500 21.500Z" />
        </svg>
      </button>
    </footer>
  );
}

export default function App() {
  return (
    <div className="flex min-h-screen flex-col bg-[#f1f3f5]">
      <MenuBar />
      <Toolbar />
      <div className="flex min-w-0 flex-1">
        <Sidebar />
        <main className="flex min-w-0 flex-1 flex-col">
          <div className="flex min-w-0 flex-1 flex-col bg-[#fbfbfb]">
            <div className="flex flex-1">
              <Canvas />
              <div className="w-2 border-r border-[#dcdcdc] pt-[203px] pl-0.5">
                <div className="h-[106px] w-1 rounded-full bg-[#e0e0e0]" />
              </div>
            </div>
            <div className="h-[9px] pt-[3px] pl-[453px]">
              <div className="h-1 w-[384px] rounded-full bg-[#e0e0e0]" />
            </div>
          </div>
          <PageTabs />
        </main>
      </div>
      <Taskbar />
    </div>
  );
}
